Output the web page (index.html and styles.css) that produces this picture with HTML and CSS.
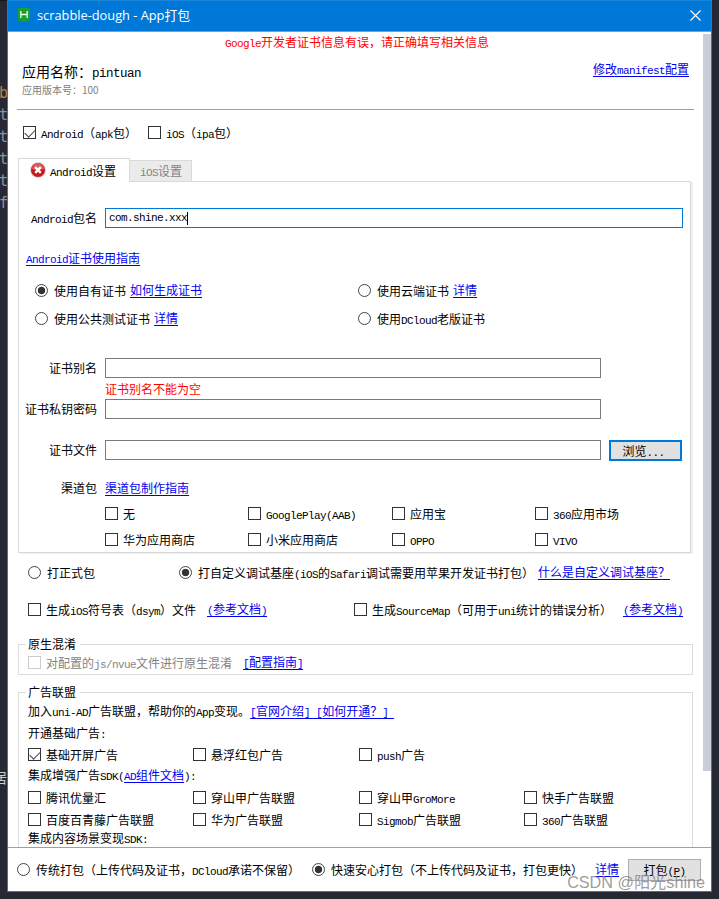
FILE: index.html
```
<!DOCTYPE html>
<html lang="zh-CN">
<head>
  <meta charset="UTF-8">
  <title>scrabble-dough - App打包</title>
  <link rel="stylesheet" href="styles.css">
</head>
<body>
  <div class="gutter">
    <span class="orange">b</span>
    <span>t</span>
    <span>t</span>
    <span>t</span>
    <span>t</span>
    <span>f</span>
    <span class="cn">居</span>
  </div>

  <div class="window">
    <div class="titlebar">
      <svg class="logo" width="12" height="14" viewBox="0 0 12 14">
        <path d="M0 0H12V12.5L6 14L0 12.5Z" fill="#1a9e35"/>
        <path d="M2.8 3V10M9.2 3V10M3 6.5H9" stroke="#e8ffe8" stroke-width="1.3" fill="none"/>
      </svg>
      <span class="title">scrabble-dough - App打包</span>
      <svg class="close" width="11" height="11" viewBox="0 0 11 11">
        <path d="M.5 .5L10.5 10.5M10.5 .5L.5 10.5" stroke="#fff" stroke-width="1.1"/>
      </svg>
    </div>

    <div class="content">
      <div class="scrollbar"></div>
      <div class="top-error"><span class="en">Google</span>开发者证书信息有误，请正确填写相关信息</div>

      <div class="header">
        <div>
          <div class="app-name">应用名称：<span class="en">pintuan</span></div>
          <div class="app-version">应用版本号：100</div>
        </div>
        <a href="#">修改<span class="en">manifest</span>配置</a>
      </div>

      <div class="row platforms">
        <label class="item"><i class="box checked"></i><span><span class="en">Android</span>（<span class="en">apk</span>包）</span></label>
        <label class="item"><i class="box"></i><span><span class="en">iOS</span>（<span class="en">ipa</span>包）</span></label>
      </div>

      <div class="tabs">
        <div class="tab active">
          <svg width="16" height="16" viewBox="0 0 16 16">
            <circle cx="8" cy="8" r="7.8" fill="#c9c9c9"/>
            <circle cx="8" cy="8" r="7" fill="#c8191f"/>
            <path d="M2 7A6 6 0 0 1 14 7Q8 9 2 7Z" fill="#de5a5c"/>
            <path d="M5.2 5.2L10.8 10.8M10.8 5.2L5.2 10.8" stroke="#fff" stroke-width="2.4"/>
          </svg>
          <span><span class="en">Android</span>设置</span>
        </div>
        <div class="tab"><span><span class="en">iOS</span>设置</span></div>
      </div>

      <div class="panel">
        <div class="field package">
          <span class="name"><span class="en">Android</span>包名</span>
          <div class="input focused"><span class="en">com.shine.xxx</span><i class="caret"></i></div>
        </div>
        <div class="row guide"><a href="#"><span class="en">Android</span>证书使用指南</a></div>

        <div class="row certs first">
          <div class="item"><i class="radio on"></i><span>使用自有证书</span><a href="#">如何生成证书</a></div>
          <div class="item"><i class="radio"></i><span>使用云端证书</span><a href="#">详情</a></div>
        </div>
        <div class="row certs">
          <div class="item"><i class="radio"></i><span>使用公共测试证书</span><a href="#">详情</a></div>
          <div class="item"><i class="radio"></i><span>使用<span class="en">DCloud</span>老版证书</span></div>
        </div>

        <div class="field alias">
          <span class="name">证书别名</span>
          <div class="input"></div>
        </div>
        <div class="field-error">证书别名不能为空</div>
        <div class="field">
          <span class="name">证书私钥密码</span>
          <div class="input"></div>
        </div>
        <div class="field file">
          <span class="name">证书文件</span>
          <div class="input"></div>
          <button class="browse">浏览<span class="en">...</span></button>
        </div>
        <div class="field channel">
          <span class="name">渠道包</span>
          <a href="#">渠道包制作指南</a>
        </div>
        <div class="row channels">
          <label class="item"><i class="box"></i><span>无</span></label>
          <label class="item"><i class="box"></i><span><span class="en">GooglePlay(AAB)</span></span></label>
          <label class="item"><i class="box"></i><span>应用宝</span></label>
          <label class="item"><i class="box"></i><span><span class="en">360</span>应用市场</span></label>
        </div>
        <div class="row channels">
          <label class="item"><i class="box"></i><span>华为应用商店</span></label>
          <label class="item"><i class="box"></i><span>小米应用商店</span></label>
          <label class="item"><i class="box"></i><span><span class="en">OPPO</span></span></label>
          <label class="item"><i class="box"></i><span><span class="en">VIVO</span></span></label>
        </div>
      </div>

      <div class="row build">
        <div class="item"><i class="radio"></i><span>打正式包</span></div>
        <div class="item"><i class="radio on"></i><span>打自定义调试基座<span class="en">(iOS</span>的<span class="en">Safari</span>调试需要用苹果开发证书打包）</span></div>
        <a href="#">什么是自定义调试基座？</a>
      </div>
      <div class="row symbols">
        <label class="item"><i class="box"></i><span>生成<span class="en">iOS</span>符号表（<span class="en">dsym</span>）文件</span></label>
        <a href="#"><span class="en">(</span>参考文档<span class="en">)</span></a>
        <label class="item"><i class="box"></i><span>生成<span class="en">SourceMap</span>（可用于<span class="en">uni</span>统计的错误分析）</span></label>
        <a href="#"><span class="en">(</span>参考文档<span class="en">)</span></a>
      </div>

      <div class="group obfuscate">
        <span class="legend">原生混淆</span>
        <div class="row">
          <label class="item disabled"><i class="box"></i><span>对配置的<span class="en">js/nvue</span>文件进行原生混淆</span></label>
          <a href="#"><span class="en">[</span>配置指南<span class="en">]</span></a>
        </div>
      </div>

      <div class="group ads">
        <span class="legend">广告联盟</span>
        <div class="line">加入<span class="en">uni-AD</span>广告联盟，帮助你的<span class="en">App</span>变现。<a href="#"><span class="en">[</span>官网介绍<span class="en">]&nbsp;[</span>如何开通？<span class="en">]&nbsp;</span></a></div>
        <div class="line">开通基础广告<span class="en">:</span></div>
        <div class="row sdk base">
          <label class="item"><i class="box checked"></i><span>基础开屏广告</span></label>
          <label class="item"><i class="box"></i><span>悬浮红包广告</span></label>
          <label class="item"><i class="box"></i><span><span class="en">push</span>广告</span></label>
        </div>
        <div class="line extra">集成增强广告<span class="en">SDK(</span><a href="#"><span class="en">AD</span>组件文档</a><span class="en">):</span></div>
        <div class="row sdk">
          <label class="item"><i class="box"></i><span>腾讯优量汇</span></label>
          <label class="item"><i class="box"></i><span>穿山甲广告联盟</span></label>
          <label class="item"><i class="box"></i><span>穿山甲<span class="en">GroMore</span></span></label>
          <label class="item"><i class="box"></i><span>快手广告联盟</span></label>
        </div>
        <div class="row sdk">
          <label class="item"><i class="box"></i><span>百度百青藤广告联盟</span></label>
          <label class="item"><i class="box"></i><span>华为广告联盟</span></label>
          <label class="item"><i class="box"></i><span><span class="en">Sigmob</span>广告联盟</span></label>
          <label class="item"><i class="box"></i><span><span class="en">360</span>广告联盟</span></label>
        </div>
        <div class="line last">集成内容场景变现<span class="en">SDK:</span></div>
      </div>
    </div>

    <div class="footer">
      <div class="item"><i class="radio"></i><span>传统打包（上传代码及证书，<span class="en">DCloud</span>承诺不保留）</span></div>
      <div class="item"><i class="radio on"></i><span>快速安心打包（不上传代码及证书，打包更快）</span></div>
      <a href="#">详情</a>
      <button class="pack">打包<span class="en">(<u>P</u>)</span></button>
    </div>
  </div>

  <div class="watermark">CSDN @阳光shine</div>
</body>
</html>
```
FILE: styles.css
```
* {
  box-sizing: border-box;
}

body {
  margin: 0;
  width: 719px;
  height: 899px;
  overflow: hidden;
  position: relative;
  display: flex;
  background: #262933;
  font: 12px/19px "Noto Sans CJK SC", sans-serif;
  color: #000;
  white-space: nowrap;
}

i {
  font-style: normal;
  flex: none;
}

a {
  color: #0000f0;
  text-decoration: underline;
  text-decoration-skip-ink: none;
  text-underline-offset: 2px;
}

/* half-width latin, exactly half of a chinese character */
.en {
  font-family: "Liberation Mono", monospace;
  font-size: 11px;
  line-height: 1;
  letter-spacing: -0.6px;
}

/* editor behind the dialog */
.gutter {
  width: 7px;
  flex: none;
  overflow: hidden;
  padding-top: 81px;
  font: 15px/22px "DejaVu Sans Mono", monospace;
  color: #8c93a3;
  border-top: 1px solid #15171c;
}

.gutter span {
  display: block;
  margin-left: -1px;
}

.gutter .orange {
  color: #bd7a4c;
}

.gutter .cn {
  margin: 552px 0 0 -7px;
  font-family: "Noto Sans CJK SC", sans-serif;
  font-size: 14px;
  color: #d5cdbd;
}

/* window */
.window {
  width: 705px;
  height: 892px;
  flex: none;
  display: flex;
  flex-direction: column;
  background: #fff;
  border: solid #1a7fd0;
  border-width: 0 1px 1px;
}

.titlebar {
  height: 32px;
  flex: none;
  display: flex;
  align-items: center;
  padding: 0 10px;
  background: #0078d7;
  border-top: 1px solid #1a86da;
  border-bottom: 1px solid #62a6dd;
  color: #fff;
}

.logo {
  flex: none;
  margin-bottom: 2px;
}

.title {
  flex: 1;
  margin: 0 0 1px 7px;
  font-family: "Open Sans", "Noto Sans CJK SC", sans-serif;
  font-size: 12.8px;
}

.close {
  margin: 0 0 1px;
}

.content {
  position: relative;
  height: 815px;
  flex: none;
  overflow: hidden;
}

.scrollbar {
  position: absolute;
  top: 2px;
  right: 0;
  width: 8px;
  height: 737px;
  background: #c9cdd8;
}

.top-error {
  height: 20px;
  padding-left: 217px;
  line-height: 20px;
  color: #f00;
}

.header {
  display: flex;
  justify-content: space-between;
  width: 677px;
  height: 58px;
  margin-left: 9px;
  padding: 9px 5px 0;
  border-bottom: 1px solid #a0a0a0;
}

.app-name {
  font-size: 14px;
  line-height: 20px;
}

.app-name .en {
  font-size: 12.5px;
  letter-spacing: -0.5px;
}

.app-version {
  font-size: 10px;
  line-height: 17px;
  color: #808080;
}

.header > a {
  line-height: 16px;
}

/* checkboxes and radios */
.row {
  height: 19px;
  display: flex;
  align-items: center;
}

.item {
  height: 19px;
  display: flex;
  align-items: center;
}

.box {
  width: 13px;
  height: 13px;
  margin-right: 5px;
  border: 1px solid #333;
  background: #fff;
}

.box.checked::after {
  content: "";
  display: block;
  width: 9px;
  height: 5px;
  margin: 2px 0 0 1px;
  border: solid #444;
  border-width: 0 0 1.5px 1.5px;
  transform: rotate(-45deg);
}

.radio {
  width: 13px;
  height: 13px;
  margin-right: 6px;
  border: 1px solid #444;
  border-radius: 50%;
  background: #fff;
}

.radio.on {
  background: radial-gradient(circle, #333 3.4px, #fff 4.1px);
}

.disabled {
  color: #838383;
}

.disabled .box {
  border-color: #ccc;
}

.row > a,
.item > a,
.footer > a {
  margin-bottom: 2px;
}

.platforms {
  height: 48px;
  padding: 0 0 3px 15px;
  gap: 11px;
}

.platforms .item {
  min-width: 114px;
}

/* tabs */
.tabs {
  display: flex;
  align-items: flex-end;
  height: 24px;
  margin: 0 0 -1px 10px;
  position: relative;
}

.tab {
  width: 62px;
  height: 22px;
  padding: 0 0 0 10px;
  background: #ebebeb;
  border: 1px solid #d9d9d9;
  border-left: none;
  color: #838383;
}

.tab.active {
  width: 112px;
  height: 24px;
  display: flex;
  align-items: center;
  gap: 4px;
  padding: 0 0 1px 11px;
  background: #fff;
  border-left: 1px solid #d9d9d9;
  border-bottom: none;
  color: #000;
}

.panel {
  width: 673px;
  height: 372px;
  margin-left: 10px;
  border: 1px solid #d9d9d9;
  box-shadow: 2px 1px 0 #f0f0f0;
}

.field {
  display: flex;
  height: 20px;
}

.name {
  width: 78px;
  margin-right: 8px;
  text-align: right;
  line-height: 20px;
}

.input {
  width: 496px;
  height: 20px;
  padding-left: 3px;
  border: 1px solid #7a7a7a;
  display: flex;
  align-items: center;
}

.input.focused {
  width: 578px;
  border-color: #0078d7;
}

.caret {
  width: 1px;
  height: 13px;
  background: #000;
}

.package {
  margin-top: 26px;
}

.guide {
  margin: 21px 0 0 7px;
}

.certs {
  height: 21px;
  margin-top: 7px;
  padding-left: 16px;
}

.certs.first {
  margin-top: 12px;
}

.certs .item:first-child {
  width: 323px;
}

.certs a {
  margin-left: 4px;
}

.alias {
  margin-top: 29px;
}

.field-error {
  height: 21px;
  padding-left: 86px;
  line-height: 21px;
  color: #f00;
}

.file {
  height: 21px;
  margin-top: 21px;
}

button {
  width: 73px;
  padding: 0;
  background: #e1e1e1;
  font: inherit;
  color: #000;
}

.browse {
  height: 21px;
  margin-left: 8px;
  padding-right: 4px;
  border: 2px solid #0078d7;
  line-height: 16px;
}

.channel {
  height: 19px;
  margin-top: 17px;
}

.channels {
  margin-top: 7px;
  padding-left: 86px;
  display: grid;
  grid-template: 19px / 143px 144px 143px auto;
}

.build {
  margin-top: 10px;
  padding-left: 20px;
}

.build .item:first-child {
  width: 151px;
}

.build .item:nth-child(2) {
  width: 359px;
}

.symbols {
  display: grid;
  grid-template: 19px / 179px 147px 269px auto;
  margin-top: 18px;
  padding-left: 20px;
}

/* group boxes */
.group {
  position: relative;
  width: 675px;
  margin-left: 10px;
  padding-left: 9px;
  border: 1px solid #dcdcdc;
}

.legend {
  position: absolute;
  top: -11px;
  left: 7px;
  padding: 0 4px 0 2px;
  background: #fff;
}

.obfuscate {
  height: 31px;
  margin-top: 25px;
  padding-top: 8px;
}

.obfuscate a {
  margin-left: 11px;
}

.ads {
  height: 200px;
  margin-top: 17px;
  padding-top: 8px;
}

.line {
  height: 22px;
}

.line.extra {
  line-height: 21px;
}

.line.last {
  line-height: 16px;
}

.sdk {
  height: 22px;
  display: grid;
  grid-template: 22px / 165px 166px 165px auto;
}

.sdk.base {
  height: 19px;
  grid-template-rows: 19px;
}

.footer {
  flex: 1;
  display: flex;
  align-items: center;
  padding: 0 0 0 9px;
  border-top: 1px solid #a0a0a0;
}

.footer .item:first-child {
  width: 295px;
}

.footer .item:nth-child(2) {
  width: 283px;
}

.pack {
  height: 22px;
  margin-left: 9px;
  border: 1px solid #adadad;
}

.watermark {
  position: absolute;
  right: 14px;
  bottom: 6px;
  font: 16.2px/22px "Liberation Sans", "Noto Sans CJK SC", sans-serif;
  color: rgba(130, 130, 130, 0.8);
}
```
